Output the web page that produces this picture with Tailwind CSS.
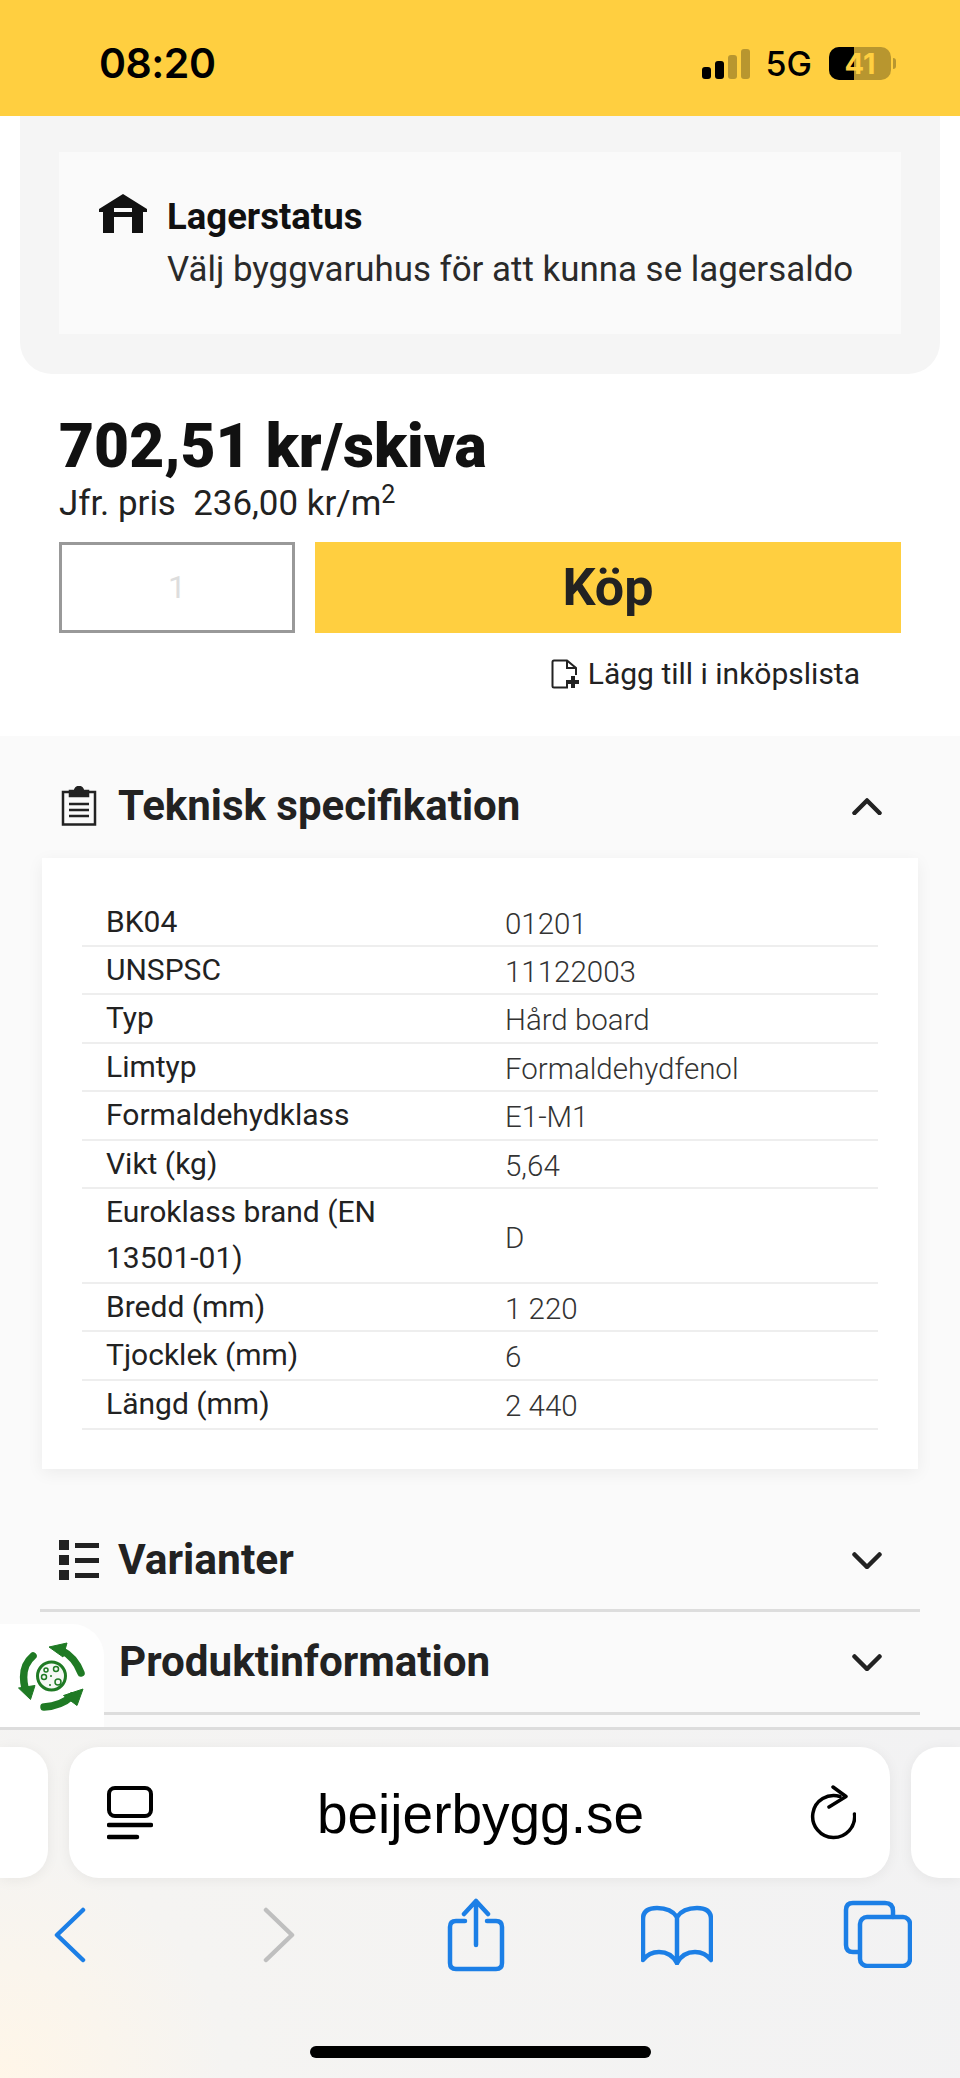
<!DOCTYPE html>
<html lang="sv">
<head>
<meta charset="utf-8">
<script src="https://cdn.jsdelivr.net/npm/@tailwindcss/browser@4"></script>
</head>
<body class="bg-white">
<div class="relative flex h-[2078px] w-[960px] flex-col overflow-hidden bg-white font-['Roboto',sans-serif] text-[#222]">

  <!-- status bar -->
  <header class="flex h-[116px] shrink-0 items-center justify-between bg-[#ffcf40] pl-[99px] pr-[64px] pt-[11px] text-black">
    <span class="font-['Inter',sans-serif] text-[41px] font-semibold leading-none tracking-[-0.5px]">08:20</span>
    <div class="flex items-center">
      <svg class="h-[32px] w-[50px]" viewBox="0 0 50 32" fill="none">
        <rect x="1" y="19" width="9" height="12" rx="3" fill="#000"/>
        <rect x="14" y="13" width="9" height="18" rx="3" fill="#000"/>
        <rect x="27" y="7" width="9" height="24" rx="3" fill="#b8962f"/>
        <rect x="40" y="1" width="9" height="30" rx="3" fill="#b8962f"/>
      </svg>
      <span class="ml-[15px] font-['Inter',sans-serif] text-[34px] font-medium leading-none">5G</span>
      <div class="relative ml-[17px] flex h-[33px] w-[62px] items-center justify-center overflow-hidden rounded-[10px] bg-[#b8962f] font-['Inter',sans-serif] text-[29px] font-bold leading-none text-[#ffcf40]">
        <div class="absolute inset-y-0 left-0 w-[25px] bg-black"></div>
        <span class="relative">41</span>
      </div>
      <div class="ml-[2px] h-[11px] w-[3px] rounded-r-full bg-[#b8962f]"></div>
    </div>
  </header>

  <!-- stock card -->
  <section class="mx-[20px] h-[258px] shrink-0 rounded-b-[32px] bg-[#f5f5f5] px-[39px] pt-[36px]">
    <div class="flex h-[182px] bg-[#fafafa] pl-[39px] pt-[47px]">
      <svg class="mt-[-5px] h-[40px] w-[50px] shrink-0" viewBox="0 0 50 40" fill="#111">
        <path d="M25 0 L49 15 L49 18 L45 18 L45 39 L34 39 L34 23 L16 23 L16 39 L5 39 L5 18 L1 18 L1 15 Z M16 14 L16 18 L34 18 L34 14 Z" fill-rule="evenodd"/>
      </svg>
      <div class="ml-[19px]">
        <div class="text-[36.5px] font-bold leading-[36px] text-[#111]">Lagerstatus</div>
        <div class="mt-[17px] text-[34.9px] font-normal leading-[36px] text-[#2a2a2a]">Välj byggvaruhus för att kunna se lagersaldo</div>
      </div>
    </div>
  </section>

  <!-- price and purchase -->
  <section class="h-[362px] shrink-0 px-[59px] pt-[40px]">
    <div class="text-[60.5px] font-black leading-[66px] text-[#111]">702,51 kr/skiva</div>
    <div class="mt-[7px] h-[34px] text-[34.9px] leading-[34px] text-[#222]">Jfr. pris&nbsp; 236,00 kr/m<sup class="text-[25px] leading-[0]">2</sup></div>
    <div class="mt-[21px] flex gap-[20px]">
      <div class="flex h-[91px] w-[236px] items-center justify-center border-[3px] border-[#999] bg-white pb-[2px] text-[32px] text-[#ddd]">1</div>
      <button class="flex h-[91px] flex-1 items-center justify-center bg-[#ffcf40] text-[52px] font-bold leading-none text-[#222]">Köp</button>
    </div>
    <div class="mt-[24px] flex items-center justify-end pr-[41px]">
      <svg class="h-[30px] w-[28px]" viewBox="0 0 28 30" fill="none" stroke="#222" stroke-width="2">
        <path d="M16 21 V28.5 H3 Q1.5 28.500 1.500 27 V3 Q1.500 1.500 3 1.500 H16 L25 9 V16"/>
        <path d="M16 1.500 V9 H25"/>
        <path d="M22 17 V29 M16 23 H28" stroke-width="4"/>
      </svg>
      <span class="ml-[9px] text-[30px] leading-[34px] text-[#222]">Lägg till i inköpslista</span>
    </div>
  </section>

  <!-- specification -->
  <section class="relative min-h-0 flex-1 bg-[#fafafa]">
    <div class="flex h-[122px] items-center pl-[61px] pr-[78px] pt-[18px]">
      <svg class="h-[40px] w-[36px] shrink-0" viewBox="0 0 36 40" fill="none" stroke="#222" stroke-width="2.500">
        <path d="M9 6 H2 V38.500 H34 V6 H27"/>
        <path d="M9 10 V5 H14 A4 4 0 0 1 22 5 H27 V10 Z" fill="#222"/>
        <path d="M8 18 H28 M8 24 H28 M8 30 H28"/>
      </svg>
      <h2 class="ml-[21px] flex-1 text-[42px] font-bold leading-none text-[#222]">Teknisk specifikation</h2>
      <svg class="h-[17px] w-[30px]" viewBox="0 0 30 17" fill="none" stroke="#222" stroke-width="4.500" stroke-linecap="round" stroke-linejoin="round"><path d="M2.500 15 L15 2.500 L27.500 15"/></svg>
    </div>

    <div class="mx-[42px] h-[611px] bg-white px-[40px] pt-[27px] shadow-[0_4px_16px_rgba(0,0,0,0.06)]">
      <dl class="text-[30px] leading-[46px]">
        <div class="grid h-[62px] grid-cols-[399px_1fr] items-center border-b-2 border-[#eee] pl-[24px] pt-[14px]"><dt class="pb-[4px] text-[#222]">BK04</dt><dd class="text-[29.5px] font-light text-[#333]">01201</dd></div>
        <div class="grid h-[48px] grid-cols-[399px_1fr] items-center border-b-2 border-[#eee] pl-[24px]"><dt class="pb-[3px] text-[#222]">UNSPSC</dt><dd class="pt-[1px] text-[29.5px] font-light text-[#333]">11122003</dd></div>
        <div class="grid h-[49px] grid-cols-[399px_1fr] items-center border-b-2 border-[#eee] pl-[24px]"><dt class="pb-[3px] text-[#222]">Typ</dt><dd class="pt-[1px] text-[29.5px] font-light text-[#333]">Hård board</dd></div>
        <div class="grid h-[48px] grid-cols-[399px_1fr] items-center border-b-2 border-[#eee] pl-[24px]"><dt class="pb-[3px] text-[#222]">Limtyp</dt><dd class="pt-[1px] text-[29.5px] font-light text-[#333]">Formaldehydfenol</dd></div>
        <div class="grid h-[49px] grid-cols-[399px_1fr] items-center border-b-2 border-[#eee] pl-[24px]"><dt class="pb-[3px] text-[#222]">Formaldehydklass</dt><dd class="pt-[1px] text-[29.5px] font-light text-[#333]">E1-M1</dd></div>
        <div class="grid h-[48px] grid-cols-[399px_1fr] items-center border-b-2 border-[#eee] pl-[24px]"><dt class="pb-[3px] text-[#222]">Vikt (kg)</dt><dd class="pt-[1px] text-[29.5px] font-light text-[#333]">5,64</dd></div>
        <div class="grid h-[95px] grid-cols-[399px_1fr] items-center border-b-2 border-[#eee] pl-[24px]"><dt class="pb-[3px] text-[#222]">Euroklass brand (EN<br>13501-01)</dt><dd class="pt-[3px] text-[29.5px] font-light text-[#333]">D</dd></div>
        <div class="grid h-[48px] grid-cols-[399px_1fr] items-center border-b-2 border-[#eee] pl-[24px]"><dt class="pb-[3px] text-[#222]">Bredd (mm)</dt><dd class="pt-[1px] text-[29.5px] font-light text-[#333]">1 220</dd></div>
        <div class="grid h-[49px] grid-cols-[399px_1fr] items-center border-b-2 border-[#eee] pl-[24px]"><dt class="pb-[3px] text-[#222]">Tjocklek (mm)</dt><dd class="pt-[1px] text-[29.5px] font-light text-[#333]">6</dd></div>
        <div class="grid h-[49px] grid-cols-[399px_1fr] items-center border-b-2 border-[#eee] pl-[24px]"><dt class="pb-[3px] text-[#222]">Längd (mm)</dt><dd class="pt-[1px] text-[29.5px] font-light text-[#333]">2 440</dd></div>
      </dl>
    </div>

    <div class="mx-[40px] flex h-[143px] items-center border-b-[3px] border-[#ddd] pl-[19px] pr-[38px] pt-[42px]">
      <svg class="h-[40px] w-[40px] shrink-0" viewBox="0 0 40 40" fill="#222">
        <rect x="0" y="0" width="10" height="10"/><rect x="0" y="15" width="10" height="10"/><rect x="0" y="30" width="10" height="10"/>
        <rect x="16" y="3" width="24" height="5"/><rect x="16" y="18" width="24" height="5"/><rect x="16" y="33" width="24" height="5"/>
      </svg>
      <h2 class="ml-[19px] flex-1 text-[42.5px] font-bold leading-none">Varianter</h2>
      <svg class="h-[17px] w-[30px]" viewBox="0 0 30 17" fill="none" stroke="#222" stroke-width="4.500" stroke-linecap="round" stroke-linejoin="round"><path d="M2.500 2.500 L15 15 L27.500 2.500"/></svg>
    </div>
    <div class="ml-[104px] mr-[40px] flex h-[103px] items-center border-b-[3px] border-[#ddd] pl-[15px] pr-[38px]">
      <h2 class="flex-1 text-[42.2px] font-bold leading-none">Produktinformation</h2>
      <svg class="h-[17px] w-[30px]" viewBox="0 0 30 17" fill="none" stroke="#222" stroke-width="4.500" stroke-linecap="round" stroke-linejoin="round"><path d="M2.500 2.500 L15 15 L27.500 2.500"/></svg>
    </div>

    <!-- floating recycling badge -->
    <div class="absolute bottom-0 left-0 flex h-[103px] w-[104px] items-center justify-center rounded-tr-[32px] bg-white">
      <svg class="h-[72px] w-[70px]" viewBox="0 0 70 72" fill="none">
        <circle cx="34.500" cy="36" r="14" stroke="#1f7a24" stroke-width="3" fill="#f4f8f4"/>
        <circle cx="29" cy="30" r="2" stroke="#1f7a24" stroke-width="1.500"/>
        <circle cx="39" cy="29" r="2.500" stroke="#1f7a24" stroke-width="1.500"/>
        <circle cx="41" cy="42" r="3" stroke="#1f7a24" stroke-width="1.500"/>
        <circle cx="27" cy="37" r="2.500" stroke="#1f7a24" stroke-width="1.500"/>
        <circle cx="34" cy="36" r="1" fill="#1f7a24"/><circle cx="33" cy="45" r="1" fill="#1f7a24"/>
        <path d="M44 10 Q58 17 64 33" stroke="#1f7a24" stroke-width="7.500" stroke-linecap="round"/>
        <path d="M32 7 L50 3 L46 17 Z" fill="#1f7a24" stroke="#1f7a24" stroke-linejoin="round"/>
        <path d="M16 16 Q3 27 8 48" stroke="#1f7a24" stroke-width="7.500" stroke-linecap="round"/>
        <path d="M1.500 48 L18 45.500 L13.500 59.500 Z" fill="#1f7a24" stroke="#1f7a24" stroke-linejoin="round"/>
        <path d="M27 67 Q44 66 55 56" stroke="#1f7a24" stroke-width="7.500" stroke-linecap="round"/>
        <path d="M46.500 55.500 L66 49 L60 65.500 Z" fill="#1f7a24" stroke="#1f7a24" stroke-linejoin="round"/>
      </svg>
    </div>
  </section>

  <!-- browser toolbar -->
  <footer class="relative h-[351px] shrink-0 border-t-[3px] border-[#ddd] bg-[radial-gradient(circle_at_0%_100%,#fff6e8_0,#f5f4f2_22%,#f2f2f3_100%)]">
    <div class="mt-[17px] flex h-[131px] items-stretch justify-between">
      <div class="w-[48px] rounded-r-[28px] bg-white shadow-[0_2px_14px_rgba(0,0,0,0.06)]"></div>
      <div class="flex w-[821px] items-center justify-between rounded-[30px] bg-white pl-[38px] pr-[34px] shadow-[0_2px_14px_rgba(0,0,0,0.06)]">
        <svg class="h-[54px] w-[46px]" viewBox="0 0 46 54" fill="none" stroke="#000" stroke-width="4" stroke-linecap="round">
          <rect x="2" y="2" width="42" height="28" rx="6"/>
          <path d="M2 39 H44 M2 51 H30" stroke-width="4.500"/>
        </svg>
        <span class="pt-[3px] font-['Liberation_Sans',sans-serif] text-[55px] leading-none text-black">beijerbygg.se</span>
        <svg class="h-[56px] w-[48px]" viewBox="0 0 48 56" fill="none" stroke="#000" stroke-width="3.500" stroke-linecap="round" stroke-linejoin="round">
          <path d="M32 11.500 A21 21 0 1 0 46.500 29"/>
          <path d="M25 2 L38 11.500 L21 22"/>
        </svg>
      </div>
      <div class="w-[49px] rounded-l-[28px] bg-white shadow-[0_2px_14px_rgba(0,0,0,0.06)]"></div>
    </div>
    <nav class="mt-[18px] flex h-[78px] items-start pl-[54px]">
      <svg class="mt-[11px] h-[56px] w-[32px]" viewBox="0 0 32 56" fill="none" stroke="#1c7fe6" stroke-width="4.500" stroke-linecap="round" stroke-linejoin="round"><path d="M29 3 L3 28 L29 53"/></svg>
      <svg class="ml-[177px] mt-[11px] h-[56px] w-[32px]" viewBox="0 0 32 56" fill="none" stroke="#bfbfbf" stroke-width="4.500" stroke-linecap="round" stroke-linejoin="round"><path d="M3 3 L29 28 L3 53"/></svg>
      <svg class="ml-[152px] mt-[2px] h-[74px] w-[58px]" viewBox="0 0 58 74" fill="none" stroke="#1c7fe6" stroke-width="4.500" stroke-linecap="round" stroke-linejoin="round">
        <path d="M18 23 H9 Q3 23 3 29 V65 Q3 71 9 71 H49 Q55 71 55 65 V29 Q55 23 49 23 H40"/>
        <path d="M29 47 V3 M17 16 L29 3 L41 16"/>
      </svg>
      <svg class="ml-[136px] mt-[9px] h-[60px] w-[72px]" viewBox="0 0 72 60" fill="none" stroke="#1c7fe6" stroke-width="4.500" stroke-linecap="round" stroke-linejoin="round">
        <path d="M36 12 Q30 3 16 3 Q2 3 2 14 V55 Q8 47 18 47 Q30 47 36 58 Q42 47 54 47 Q64 47 70 55 V14 Q70 3 56 3 Q42 3 36 12 Z"/>
        <path d="M36 12 V58"/>
      </svg>
      <svg class="ml-[130px] mt-[4px] h-[68px] w-[69px]" viewBox="0 0 69 68" fill="none" stroke="#1c7fe6" stroke-width="4.500" stroke-linecap="round" stroke-linejoin="round">
        <path d="M15 52 H10 Q3 52 3 45 V10 Q3 3 10 3 H42 Q50 3 50 11 V17"/>
        <rect x="17" y="17" width="50" height="49" rx="7"/>
      </svg>
    </nav>
    <div class="absolute bottom-[20px] left-[310px] h-[12px] w-[341px] rounded-full bg-black"></div>
  </footer>
</div>
</body>
</html>
